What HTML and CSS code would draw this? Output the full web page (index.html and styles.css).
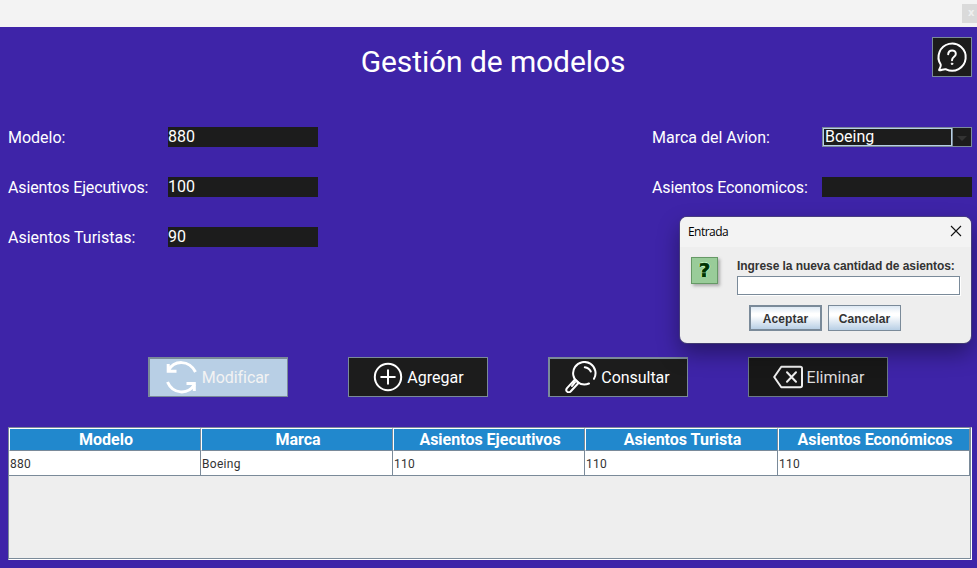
FILE: index.html
```
<!DOCTYPE html>
<html lang="es">
<head>
<meta charset="utf-8">
<title>Gestión de modelos</title>
<link rel="stylesheet" href="styles.css">
</head>
<body>
<div class="titlebar"><span class="win-close">x</span></div>
<main class="panel">
  <header class="head">
    <h1><span>Gestión de modelos</span></h1>
    <button class="help" aria-label="Ayuda">
      <svg width="38" height="38" viewBox="0 0 38 38" fill="none" stroke="#fff" stroke-width="2" stroke-linecap="round" stroke-linejoin="round"><path d="M7.7 26.5A13.6 13.6 0 1 1 13.1 31.3C10.5 30.6 8.5 32.5 6.1 32.2C5.9 30.5 8.5 29.4 7.7 26.5Z"/><path stroke-width="2" d="M15.2 16.3C15.4 11.2 23 11.2 22.8 16C22.8 18.8 19 18.7 19 22.2"/><circle cx="19" cy="25.8" r=".8" fill="#fff" stroke-width="1"/></svg>
    </button>
  </header>
  <section class="form">
    <div class="col">
      <div class="field"><label class="plain">Modelo:</label><div class="input">880</div></div>
      <div class="field"><label>Asientos Ejecutivos:</label><div class="input">100</div></div>
      <div class="field"><label class="plain">Asientos Turistas:</label><div class="input">90</div></div>
    </div>
    <div class="col right">
      <div class="field"><label class="plain">Marca del Avion:</label><div class="combo"><div class="value">Boeing</div><div class="arrow"><i></i></div></div></div>
      <div class="field"><label>Asientos Economicos:</label><div class="input"></div></div>
    </div>
  </section>
  <section class="actions">
    <button class="btn pressed">
      <svg width="32" height="36" viewBox="0 0 32 36" fill="none" stroke="#fff" stroke-width="3"><path d="M2.5 11.5C8 1 23 .5 29.5 13"/><path d="M2.2 5V12.3H10.5"/><path d="M1.5 23C7 35.5 22 36 28.5 25.5"/><path d="M20.5 24.5H28.3V32"/></svg>
      <span>Modificar</span>
    </button>
    <button class="btn flat">
      <svg width="30" height="30" viewBox="0 0 30 30" fill="none" stroke="#fff" stroke-width="2"><circle cx="15" cy="15" r="13.2"/><path d="M15 8.2V21.8M8.2 15H21.8" stroke-linecap="round"/></svg>
      <span>Agregar</span>
    </button>
    <button class="btn beveled">
      <svg width="32" height="32" viewBox="0 0 32 32" fill="none" stroke="#fff" stroke-width="2" stroke-linecap="round" stroke-linejoin="round"><path d="M29 17.8A11.2 11.2 0 1 0 12.7 21.2C15.8 23.5 20.5 24 24 22.5"/><path d="M19.8 6.3Q24 6.8 25.8 10.5"/><path d="M10 18.3L2 27.1C-.1 29.8 3 32.7 5.6 30.5L13.7 21.7M10 18.3L13.7 21.7M10 21.2L7 25"/></svg>
      <span>Consultar</span>
    </button>
    <button class="btn flat shaded">
      <svg width="30" height="30" viewBox="0 0 30 30" fill="none" stroke="#eee" stroke-width="2" stroke-linecap="round" stroke-linejoin="round"><path d="M8.3 4.7H27.3Q29 4.7 29 6.4V23.6Q29 25.3 27.3 25.3H8.3L1.2 15Z"/><path d="M14 10.3L23 19.7M23 10.3L14 19.7"/></svg>
      <span>Eliminar</span>
    </button>
  </section>
  <section class="table">
    <div class="row th"><div>Modelo</div><div>Marca</div><div>Asientos Ejecutivos</div><div>Asientos Turista</div><div>Asientos Económicos</div></div>
    <div class="row td"><div>880</div><div>Boeing</div><div>110</div><div>110</div><div>110</div></div>
  </section>
</main>
<div class="dialog" role="dialog">
  <div class="dialog-title"><span>Entrada</span>
    <svg width="12" height="12" viewBox="0 0 12 12" stroke="#111" stroke-width="1.1"><path d="M1 1L11 11M11 1L1 11"/></svg>
  </div>
  <div class="dialog-body">
    <div class="q"><b>?</b></div>
    <div class="prompt"><label>Ingrese la nueva cantidad de asientos:</label><div class="text"></div></div>
  </div>
  <div class="dialog-actions"><button class="default">Aceptar</button><button>Cancelar</button></div>
</div>
</body>
</html>
```
FILE: styles.css
```
* { box-sizing: border-box; }
body { margin: 0; width: 977px; height: 568px; overflow: hidden; background: #3e24a8; font-family: Roboto, sans-serif; color: #fff; }
button { font: inherit; color: inherit; padding: 0; margin: 0; border-radius: 0; }
.titlebar { height: 27px; background: #f3f3f3; display: flex; justify-content: flex-end; padding-top: 4px; }
.win-close { width: 15px; height: 19px; background: #dadada; color: #f0f0f0; font: bold 10px/18px "DejaVu Sans", sans-serif; padding-left: 6px; }
.panel { height: 541px; padding: 10px 5px 8px 8px; display: flex; flex-direction: column; }
.head { display: flex; height: 40px; }
h1 { flex: 1; margin: 0; padding-left: 46px; text-align: center; font-size: 30px; font-weight: 400; line-height: 49px; letter-spacing: -.1px; white-space: nowrap; }
.help { width: 40px; height: 40px; background: #1c1c1c; border: 1px solid #7a8a99; display: flex; }
.form { margin-top: 50px; display: flex; justify-content: space-between; }
.col { width: 310px; display: grid; gap: 30px; align-content: start; }
.col.right { width: 320px; }
.field { display: flex; justify-content: space-between; height: 20px; font-size: 16px; line-height: 21px; white-space: nowrap; letter-spacing: -.13px; }
.plain { letter-spacing: 0; }
.input, .combo { width: 150px; height: 20px; background: #1c1c1c; line-height: 20px; letter-spacing: 0; }
.combo { display: flex; border: 1px solid #7a8a99; }
.value { width: 129px; height: 18px; border: 1px solid #b8cfe5; border-bottom-width: 1px; padding-left: 1px; overflow: hidden; line-height: 16px; }
.arrow { flex: 1; border-left: 1px solid #7a8a99; display: grid; place-items: center; }
.arrow i { border: 5px solid transparent; border-top-color: #333; border-bottom: 0; margin-top: 2px; }
.actions { margin: 110px 0 0 140px; display: flex; gap: 60px; }
.btn { width: 140px; height: 40px; background: #1c1c1c; border: 1px solid #7a8a99; display: flex; align-items: center; justify-content: center; gap: 4px; font-size: 16px; line-height: 20px; }
.beveled, .pressed { border-width: 2px 1px 1px 2px; letter-spacing: -.05px; padding: 0 2px 1px 0; }
.beveled span, .pressed span { padding-top: 1px; }
.flat { padding-left: 1px; }
.flat span { padding-top: 2px; }
.pressed { background: #b8cfe5; }
.pressed span { color: #f3f3f3; }
.shaded { background: #181818; border-color: #6c7a87; color: #ddd; }
.table { margin-top: 30px; width: 964px; height: 133px; border: 1px solid #7a8a99; border-bottom-color: #fff; border-right-color: #fff; background: #eee; box-shadow: inset -1px -1px #7a8a99; }
.row { display: grid; grid-template-columns: 192px 192px 192px 193px 192px; width: 961px; }
.th { height: 23px; font-size: 16px; font-weight: 700; line-height: 21px; text-align: center; }
.th div { background: #2188cd; border: 1px solid #7a8a99; border-top-color: #fff; border-left-color: #fff; padding-left: 2px; white-space: nowrap; }
.td { height: 25px; color: #333; font-size: 12px; line-height: 26px; letter-spacing: .3px; }
.td div { height: 25px; background: #fff; border: solid #7a8a99; border-width: 0 1px 1px 0; padding-left: 1px; }
.dialog { position: absolute; left: 680px; top: 217px; width: 291px; height: 126px; border-radius: 7px; background: #eee; color: #333; box-shadow: 0 0 0 1px rgba(80,80,110,.6), 0 10px 22px rgba(0,0,0,.38); }
.dialog-title { height: 30px; border-radius: 7px 7px 0 0; background: #f3f3f3; display: flex; justify-content: space-between; padding: 8px 9px 0 8px; font: 12px/14px "Open Sans", sans-serif; letter-spacing: -.55px; color: #000; }
.dialog-body { display: flex; padding: 10px 11px 0; gap: 19px; }
.q { width: 27px; height: 27px; background: #9c9; border: 1px solid #696; box-shadow: 2px 2px 3px #aaa; color: #030; display: grid; place-items: center; font: bold 20px/25px "DejaVu Sans", sans-serif; text-shadow: 1px 0 #cfc, -1px 0 #cfc, 0 1px #cfc, 0 -1px #cfc; -webkit-text-stroke: .6px #030; }
.prompt { flex: 1; font: bold 12px/18px "Liberation Sans", sans-serif; white-space: nowrap; letter-spacing: -.06px; }
.prompt label { display: block; height: 19px; }
.text { height: 19px; background: #fff; border: 1px solid #7a8a99; box-shadow: 1px 1px #fff; }
.dialog-actions { display: flex; gap: 6px; padding: 10px 0 0 69px; }
.dialog-actions button { width: 73px; height: 26px; border: 1px solid #7a8a99; background: linear-gradient(#dde8f3, #fff 30%, #fff 40%, #b8cfe5); color: #333; font: bold 12px/20px "Liberation Sans", sans-serif; letter-spacing: .1px; padding-top: 2px; }
.dialog-actions .default { border-width: 2px; }
```
